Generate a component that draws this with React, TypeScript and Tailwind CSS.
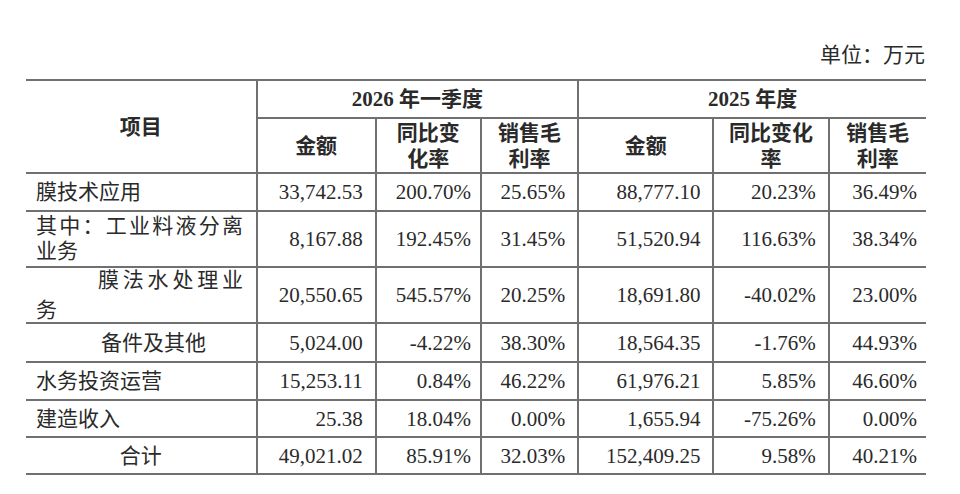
import React from "react";

const serif = { fontFamily: '"Liberation Serif", "Noto Sans CJK SC", serif' };

type Row = { label: React.ReactNode; h: number; vals: string[] };

const Spread = ({ text, className }: { text: string; className: string }) => (
  <div className={`flex justify-between ${className}`}>
    {text.split("").map((c, i) => (
      <span key={i}>{c}</span>
    ))}
  </div>
);

const rows: Row[] = [
  {
    label: <div className="pl-[10px]">膜技术应用</div>,
    h: 38,
    vals: ["33,742.53", "200.70%", "25.65%", "88,777.10", "20.23%", "36.49%"],
  },
  {
    label: (
      <div className="pl-[10px] leading-[25px]">
        <Spread text="其中：工业料液分离" className="w-[207px]" />
        <div>业务</div>
      </div>
    ),
    h: 56,
    vals: ["8,167.88", "192.45%", "31.45%", "51,520.94", "116.63%", "38.34%"],
  },
  {
    label: (
      <div className="pl-[10px] leading-[24px] flex flex-col gap-[6px]">
        <Spread text="膜法水处理业" className="ml-[62px] w-[145px]" />
        <div>务</div>
      </div>
    ),
    h: 56,
    vals: ["20,550.65", "545.57%", "20.25%", "18,691.80", "-40.02%", "23.00%"],
  },
  {
    label: <div className="pl-[75px]">备件及其他</div>,
    h: 39,
    vals: ["5,024.00", "-4.22%", "38.30%", "18,564.35", "-1.76%", "44.93%"],
  },
  {
    label: <div className="pl-[10px]">水务投资运营</div>,
    h: 38,
    vals: ["15,253.11", "0.84%", "46.22%", "61,976.21", "5.85%", "46.60%"],
  },
  {
    label: <div className="pl-[10px]">建造收入</div>,
    h: 37,
    vals: ["25.38", "18.04%", "0.00%", "1,655.94", "-75.26%", "0.00%"],
  },
  {
    label: <div className="text-center">合计</div>,
    h: 37,
    vals: ["49,021.02", "85.91%", "32.03%", "152,409.25", "9.58%", "40.21%"],
  },
];

const cellB = "border-2 border-[#707070] p-0";

export default function App() {
  return (
    <div
      className="w-[960px] h-[494px] bg-white text-[#2a2a2a] text-[21px] leading-[26px] overflow-hidden"
      style={serif}
    >
      <div className="pt-[41px] pr-[35px] text-right leading-[28px]">单位：万元</div>
      <div className="mt-[10px] pl-[26px]">
        <table className="table-fixed border-collapse w-[900px]">
          <colgroup>
            <col className="w-[230px]" />
            <col className="w-[119px]" />
            <col className="w-[105px]" />
            <col className="w-[97px]" />
            <col className="w-[135px]" />
            <col className="w-[115px]" />
            <col className="w-[97px]" />
          </colgroup>
          <thead>
            <tr className="h-[38px]">
              <th rowSpan={2} className={`${cellB} border-l-0 font-bold text-center`}>
                项目
              </th>
              <th colSpan={3} className={`${cellB} font-bold text-center`}>
                2026 年一季度
              </th>
              <th colSpan={3} className={`${cellB} border-r-0 font-bold text-center`}>
                2025 年度
              </th>
            </tr>
            <tr className="h-[55px] leading-[26px]">
              <th className={`${cellB} font-bold`}>金额</th>
              <th className={`${cellB} font-bold`}>
                同比变
                <br />
                化率
              </th>
              <th className={`${cellB} font-bold`}>
                销售毛
                <br />
                利率
              </th>
              <th className={`${cellB} font-bold`}>金额</th>
              <th className={`${cellB} font-bold`}>
                同比变化
                <br />率
              </th>
              <th className={`${cellB} border-r-0 font-bold`}>
                销售毛
                <br />
                利率
              </th>
            </tr>
          </thead>
          <tbody>
            {rows.map((r, i) => (
              <tr key={i} style={{ height: r.h }}>
                <td className={`${cellB} border-l-0 align-middle`}>{r.label}</td>
                {r.vals.map((v, j) => (
                  <td
                    key={j}
                    className={`${cellB} ${j === 5 ? "border-r-0 pr-[9px]" : j === 1 ? "pr-[9px]" : "pr-[12px]"} text-right align-middle`}
                  >
                    {v}
                  </td>
                ))}
              </tr>
            ))}
          </tbody>
        </table>
      </div>
    </div>
  );
}
